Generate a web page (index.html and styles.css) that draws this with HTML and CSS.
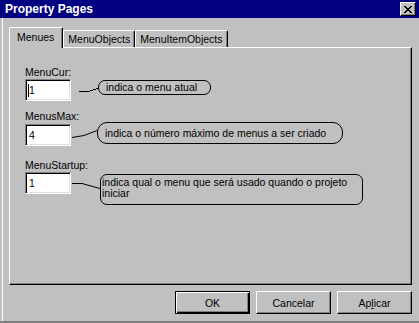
FILE: index.html
```html
<!DOCTYPE html>
<html lang="pt">
<head>
    <meta charset="UTF-8">
    <title>Property Pages</title>
    <link rel="stylesheet" href="styles.css">
</head>
<body>
    <div class="window">
        <div class="titlebar">
            <span class="title">Property Pages</span>
            <button class="close-btn" aria-label="Fechar">
                <svg width="8" height="7" viewBox="0 0 8 7" shape-rendering="crispEdges">
                    <path d="M0 0h2v1h-2zM6 0h2v1h-2zM1 1h2v1h-2zM5 1h2v1h-2zM2 2h4v1h-4zM3 3h2v1h-2zM2 4h4v1h-4zM1 5h2v1h-2zM5 5h2v1h-2zM0 6h2v1h-2zM6 6h2v1h-2z" fill="#000"/>
                </svg>
            </button>
        </div>

        <div class="frame">
            <div class="client">
                <div class="tabs">
                    <div class="tab tab-active">Menues</div>
                    <div class="tab">MenuObjects</div>
                    <div class="tab">MenuItemObjects</div>
                </div>

                <div class="panel">
                    <div class="field">
                        <div class="label">MenuCur:</div>
                        <div class="control">
                            <div class="textbox textbox-focus">1</div>
                            <svg class="connector" width="27" height="22" shape-rendering="crispEdges">
                                <polyline points="8,12.5 17,12.5 27,9.5" fill="none" stroke="#000" stroke-width="1"/>
                            </svg>
                            <div class="bubble bubble-cur">indica o menu atual</div>
                        </div>
                    </div>

                    <div class="field field-max">
                        <div class="label">MenusMax:</div>
                        <div class="control">
                            <div class="textbox textbox-low">4</div>
                            <svg class="connector" width="26" height="22">
                                <polyline points="1,14.5 13,12.5 26,7.5" fill="none" stroke="#000" stroke-width="1"/>
                            </svg>
                            <div class="bubble bubble-max">indica o número máximo de menus a ser criado</div>
                        </div>
                    </div>

                    <div class="field field-startup">
                        <div class="label">MenuStartup:</div>
                        <div class="control">
                            <div class="textbox">1</div>
                            <svg class="connector" width="29" height="22">
                                <polyline points="1,11.5 11,11.5 29,16.5" fill="none" stroke="#000" stroke-width="1"/>
                            </svg>
                            <div class="bubble bubble-startup">indica qual o menu que será usado quando o projeto<br>iniciar</div>
                        </div>
                    </div>
                </div>

                <div class="actions">
                    <button class="btn btn-default">OK</button>
                    <button class="btn">Cancelar</button>
                    <button class="btn">Ap<u>l</u>icar</button>
                </div>
            </div>
        </div>
    </div>
</body>
</html>
```

FILE: styles.css
```css
body {
    margin: 0;
    background-color: #c0c0c0;
    font-family: "Liberation Sans", Arial, sans-serif;
    font-size: 10.5px;
    color: #000;
}
.window {
    width: 419px;
    height: 323px;
    background-color: #c0c0c0;
    overflow: hidden;
}
.titlebar {
    height: 18px;
    background-color: #000080;
    display: flex;
    align-items: center;
    padding: 0 3px 0 5px;
}
.title {
    color: #fff;
    font-weight: bold;
    font-size: 12px;
}
.close-btn {
    margin-left: auto;
    width: 16px;
    height: 14px;
    padding: 0;
    background-color: #c0c0c0;
    border: 1px solid;
    border-color: #fff #000 #000 #fff;
    box-shadow: inset -1px -1px #808080;
    display: flex;
    align-items: center;
    justify-content: center;
}
.frame {
    height: 305px;
    box-sizing: border-box;
    border-bottom: 2px solid #808080;
    padding-left: 2px;
}
.client {
    height: 303px;
    box-sizing: border-box;
    border-left: 1px solid #fff;
    padding: 9px 7px 0 6px;
}
.tabs {
    display: flex;
    align-items: flex-end;
    height: 20px;
}
.tab {
    height: 17px;
    box-sizing: border-box;
    padding: 0 4px;
    border: 1px solid;
    border-color: #fff #000 transparent #fff;
    border-bottom: none;
    border-radius: 2px 2px 0 0;
    box-shadow: inset -1px 0 #808080;
    display: flex;
    align-items: center;
    justify-content: center;
}
.tab-active {
    height: 21px;
    margin-bottom: -1px;
    padding: 3px 8px 0 7px;
    background-color: #c0c0c0;
    position: relative;
    z-index: 1;
    align-items: flex-start;
}
.panel {
    height: 238px;
    box-sizing: border-box;
    border: 1px solid;
    border-color: #fff #000 #000 #fff;
    box-shadow: inset -1px -1px #808080;
    padding: 18px 0 0 15px;
}
.label {
    line-height: 13px;
}
.field-max {
    margin-top: 9px;
}
.field-startup {
    margin-top: 13px;
}
.control {
    display: flex;
    align-items: flex-start;
}
.textbox {
    width: 46px;
    height: 22px;
    box-sizing: border-box;
    background-color: #fff;
    border: 1px solid;
    border-color: #808080 #fff #fff #808080;
    box-shadow: inset 1px 1px #000, inset -1px -1px #dfdfdf;
    padding: 0 0 0 3px;
    line-height: 20px;
    position: relative;
}
.textbox-focus::before {
    content: "";
    position: absolute;
    left: 2px;
    top: 4px;
    width: 1px;
    height: 13px;
    background-color: #000;
}
.textbox-low {
    margin-top: 1px;
}
.connector {
    flex: none;
}
.bubble {
    border: 1px solid #000;
    box-sizing: border-box;
    white-space: nowrap;
}
.bubble-cur {
    width: 113px;
    height: 15px;
    margin-top: 1px;
    border-radius: 7px;
    padding-left: 7px;
    line-height: 13px;
}
.bubble-max {
    width: 246px;
    height: 22px;
    margin-top: -1px;
    border-radius: 10px;
    padding-left: 7px;
    line-height: 20px;
}
.bubble-startup {
    width: 263px;
    height: 31px;
    margin-top: 2px;
    border-radius: 7px;
    padding: 2px 0 0 1px;
    line-height: 11px;
}
.actions {
    display: flex;
    justify-content: flex-end;
    gap: 6px;
    margin-top: 6px;
}
.btn {
    width: 75px;
    height: 23px;
    padding: 0;
    font-family: inherit;
    font-size: 10.5px;
    color: #000;
    background-color: #c0c0c0;
    border: 1px solid;
    border-color: #fff #000 #000 #fff;
    box-shadow: inset -1px -1px #808080;
}
.btn-default {
    border-color: #000;
    box-shadow: inset 1px 1px #fff, inset -1px -1px #000, inset -2px -2px #808080;
}
```
